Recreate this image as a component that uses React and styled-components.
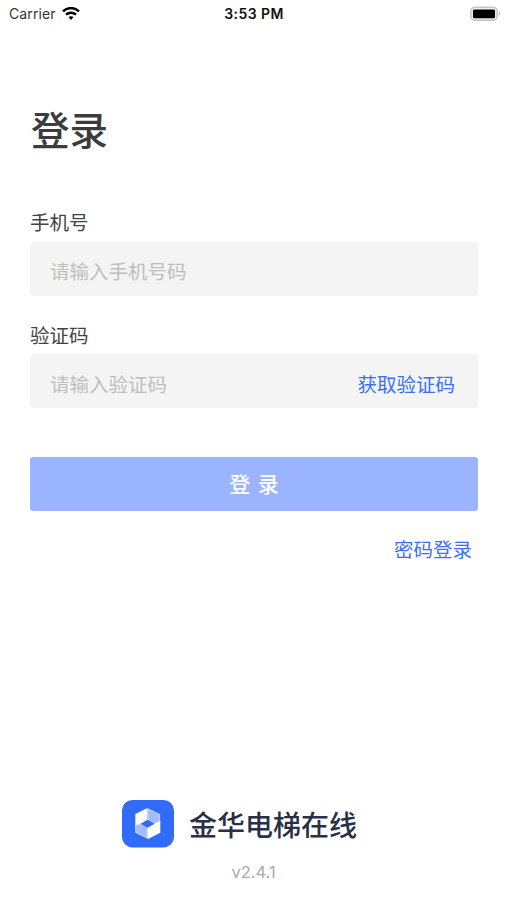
import React, { useState } from 'react'
import styled, { createGlobalStyle } from 'styled-components'

const PRIMARY = '#3a70f2'
const FIELD__BG = '#f4f4f4'

const GlobalStyle = createGlobalStyle`
    * {
        box-sizing: border-box;
    }

    body {
        margin: 0;
        background-color: #fff;
        font-family: "Noto Sans CJK SC", sans-serif;
    }
`

const Screen = styled.div`
    display: flex;
    flex-direction: column;
    width: 507px;
    height: 900px;
    overflow: hidden;
    background-color: #fff;
`

const StatusBar = styled.header`
    display: grid;
    grid-template-columns: 1fr auto 1fr;
    align-items: center;
    height: 27px;
    padding: 0 6px 0 9px;
    font-family: Inter, sans-serif;
    font-size: 14px;
    line-height: 27px;
    color: #111;
`

const Carrier = styled.div`
    display: flex;
    align-items: center;
    gap: 6px;
    letter-spacing: 0.1px;
    color: #333;
`

const Time = styled.div`
    margin-right: 2px;
    font-weight: 600;
    letter-spacing: 0.45px;
`

const Battery = styled.svg`
    justify-self: end;
`

const Form = styled.form`
    display: flex;
    flex-direction: column;
    padding: 71px 29px 0 30px;
`

const Title = styled.h1`
    margin: 0 0 51px;
    padding-left: 1px;
    font-size: 38.5px;
    font-weight: 500;
    line-height: 60px;
    color: #3c3c3e;
`

const Label = styled.label`
    height: ${props => props.$short ? '32px' : '33px'};
    font-size: 19.5px;
    line-height: 25px;
    color: #444;
`

const Field = styled.div`
    display: flex;
    align-items: center;
    height: 54px;
    margin-bottom: ${props => props.$last ? '49px' : '26px'};
    padding: ${props => props.$last ? '5px' : '3px'} 23px 0 20px;
    border-radius: 4px;
    background-color: ${FIELD__BG};
`

const Input = styled.input`
    flex: 1;
    min-width: 0;
    padding: 0;
    border: 0;
    outline: 0;
    background: none;
    font-family: inherit;
    font-size: 19.5px;
    color: #444;

    &::placeholder {
        color: #bebebe;
        opacity: 1;
    }
`

const TextButton = styled.button`
    padding: 0;
    border: 0;
    background: none;
    font-family: inherit;
    font-size: 19.5px;
    line-height: 28px;
    color: ${PRIMARY};
    cursor: pointer;
`

const SubmitButton = styled.button`
    height: 54px;
    padding: 0 0 2px;
    border: 0;
    border-radius: 3px;
    background-color: #9ab4ff;
    font-family: inherit;
    font-size: 21px;
    font-weight: 500;
    word-spacing: 3px;
    color: #fff;
`

const SwitchRow = styled.div`
    display: flex;
    justify-content: flex-end;
    padding: 24px 6px 0 0;
`

const Footer = styled.footer`
    display: flex;
    flex-direction: column;
    align-items: center;
    margin-top: auto;
    padding: 0 28px 15px 0;
`

const Brand = styled.div`
    display: flex;
    align-items: center;
    gap: 15px;
    height: 48px;
    font-size: 28px;
    font-weight: 500;
    line-height: 46px;
    color: #273047;
`

const Version = styled.div`
    margin: 12px 0 0 28px;
    font-family: Inter, sans-serif;
    font-size: 16.5px;
    line-height: 25px;
    color: #aaa;
`

function WifiIcon() {
    return (
        <svg width="18" height="14" viewBox="0 0 18 14" fill="none" stroke="#000" strokeWidth="2.5">
            <path d="M1 4.3C5.5 0 12.5 0 17 4.3" />
            <path d="M4 7.7c2.8-2.6 7.2-2.6 10 0" />
            <path d="M6.5 10.1c1.4-1.3 3.6-1.3 5 0L9 12.9Z" fill="#000" stroke="none" />
        </svg>
    )
}

function BatteryIcon() {
    return (
        <Battery width="31" height="16" viewBox="0 0 31 16">
            <rect x=".8" y="1.2" width="26.4" height="13" rx="4" fill="#eee" stroke="#c4c4c4" strokeWidth="1.4" />
            <rect x="3" y="3.4" width="22" height="8.8" rx="1.2" fill="#000" />
            <path d="M28.8 5.6c2 .8 2 3.4 0 4.2Z" fill="#bbb" />
        </Battery>
    )
}

function Logo() {
    return (
        <svg width="52" height="48" viewBox="0 0 52 48">
            <rect width="52" height="47.4" rx="10.5" fill="#316bfb" />
            <path d="M13.3 14 25.5 8v12.3L19.5 23.7l-6.2 2.6Z" fill="#fff" />
            <path d="M26 8.8 37.6 14.4v9.4l-5.8-.3-5.8-3.2Z" fill="#a3bcfd" stroke="#e3ebff" strokeWidth=".8" />
            <path d="m13.7 24.9 5.8-1 5.7 3.4v10.8l-11.5-5.6Z" fill="#a3bcfd" stroke="#e3ebff" strokeWidth=".8" />
            <path d="m25.5 27.3 6.3-3.6 6.5-3v12.1l-12.8 6.5Z" fill="#fff" />
            <path d="m18.6 23.7 6.9-3.9 7.2 3.9-7.2 4.1Z" fill="#316bfb" />
        </svg>
    )
}

function App() {
    const [phone, setPhone] = useState('')
    const [code, setCode] = useState('')

    return (
        <Screen>
            <GlobalStyle />
            <StatusBar>
                <Carrier>
                    Carrier
                    <WifiIcon />
                </Carrier>
                <Time>3:53 PM</Time>
                <BatteryIcon />
            </StatusBar>
            <Form onSubmit={e => e.preventDefault()}>
                <Title>登录</Title>
                <Label htmlFor="phone">手机号</Label>
                <Field>
                    <Input id="phone" placeholder="请输入手机号码" value={phone} onChange={e => setPhone(e.target.value)} />
                </Field>
                <Label $short htmlFor="code">验证码</Label>
                <Field $last>
                    <Input id="code" placeholder="请输入验证码" value={code} onChange={e => setCode(e.target.value)} />
                    <TextButton type="button">获取验证码</TextButton>
                </Field>
                <SubmitButton type="submit">登 录</SubmitButton>
                <SwitchRow>
                    <TextButton type="button">密码登录</TextButton>
                </SwitchRow>
            </Form>
            <Footer>
                <Brand>
                    <Logo />
                    金华电梯在线
                </Brand>
                <Version>v2.4.1</Version>
            </Footer>
        </Screen>
    )
}

export default App
